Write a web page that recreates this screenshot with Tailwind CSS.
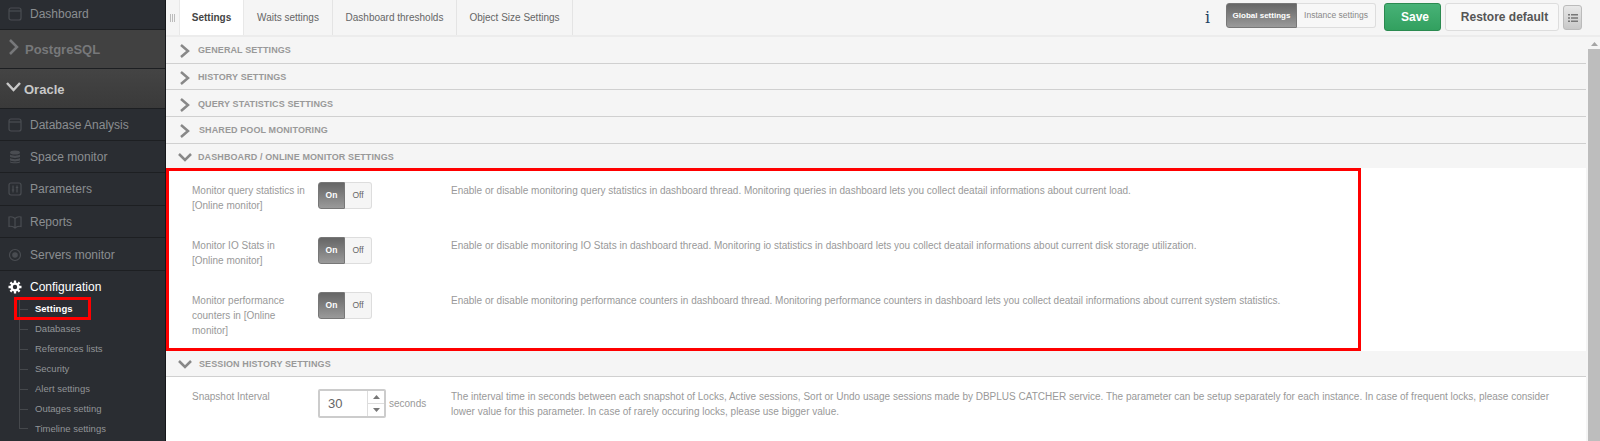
<!DOCTYPE html>
<html lang="en">
<head>
  <meta charset="UTF-8">
  <title>Settings</title>
  <script src="https://cdn.jsdelivr.net/npm/@tailwindcss/browser@4"></script>
</head>
<body class="bg-white font-['Liberation_Sans',Arial,sans-serif]">
  <div class="relative flex h-[441px] w-[1600px] overflow-hidden">

    <!-- sidebar -->
    <aside class="w-[166px] shrink-0 bg-[#2a2d32] border-r border-[#15171a] text-[#8b8e91] text-[12px]">
      <div class="flex items-center h-[30px] pl-[8px] pb-[2px] gap-[8px] border-b border-[#1d1f22]">
        <svg width="14" height="14" viewBox="0 0 14 14" fill="none" stroke="#4a4d52" stroke-width="1.2"><rect x="1" y="1" width="12" height="12" rx="2"/><path d="M1 4h12"/></svg>
        <span>Dashboard</span>
      </div>
      <div class="flex items-center h-[39px] pl-[9px] gap-[6px] bg-[#414141] border-b border-[#1d1f22] text-[#77787a] font-bold text-[13px]">
        <svg class="-mt-1" width="10" height="16" viewBox="0 0 10 16" fill="none" stroke="#77787a" stroke-width="2.500"><path d="M1 1l7 7-7 7"/></svg>
        <span class="mt-px">PostgreSQL</span>
      </div>
      <div class="flex items-center h-[39px] pl-[6px] gap-[3px] bg-linear-to-b from-[#444] to-[#3a3a3a] text-[#c8c8c8] font-bold text-[13px]">
        <svg width="15" height="10" viewBox="0 0 15 10" fill="none" stroke="#c8c8c8" stroke-width="2.500" class="-mt-1"><path d="M1 1l6.500 7 6.500-7"/></svg>
        <span class="mt-[3px]">Oracle</span>
      </div>
      <div class="flex items-center h-[33px] pl-[8px] gap-[8px] border-b border-t border-[#1d1f22]">
        <svg width="14" height="14" viewBox="0 0 14 14" fill="none" stroke="#4a4d52" stroke-width="1.2"><rect x="1" y="1" width="12" height="12" rx="2"/><path d="M1 4h12"/></svg>
        <span>Database Analysis</span>
      </div>
      <div class="flex items-center h-[32px] pl-[8px] gap-[8px] pt-px border-b border-[#1d1f22]">
        <svg width="14" height="14" viewBox="0 0 14 14" fill="#4a4d52"><ellipse cx="7" cy="2.500" rx="5" ry="2"/><path d="M2 4.500c1 1.500 9 1.500 10 0v2.300c-1 1.500-9 1.500-10 0zM2 8c1 1.500 9 1.500 10 0v2.300c-1 1.500-9 1.500-10 0zM2 11.200c1 1.500 9 1.500 10 0v1c-1 1.500-9 1.500-10 0z"/></svg>
        <span>Space monitor</span>
      </div>
      <div class="flex items-center h-[33px] pl-[8px] gap-[8px] border-b border-[#1d1f22]">
        <svg width="14" height="14" viewBox="0 0 14 14" fill="none" stroke="#4a4d52" stroke-width="1.2"><rect x="1" y="1" width="12" height="12" rx="2"/><path d="M5 3.500v7M9 3.500v7M3.800 8h2.400M7.800 5.500h2.400"/></svg>
        <span>Parameters</span>
      </div>
      <div class="flex items-center h-[32px] pl-[8px] gap-[8px] pt-px border-b border-[#1d1f22]">
        <svg width="14" height="14" viewBox="0 0 14 14" fill="none" stroke="#4a4d52" stroke-width="1.2"><path d="M7 3.500C5.500 2 3 1.500 1 2v9.500c2-.5 4.500 0 6 1.500 1.500-1.500 4-2 6-1.500V2c-2-.5-4.500 0-6 1.500zM7 3.500V13"/></svg>
        <span>Reports</span>
      </div>
      <div class="flex items-center h-[33px] pl-[8px] gap-[8px] pt-px border-b border-[#1d1f22]">
        <svg width="14" height="14" viewBox="0 0 14 14" fill="none" stroke="#4a4d52" stroke-width="1.2"><circle cx="7" cy="7" r="5.500"/><circle cx="7" cy="7" r="2.200" fill="#4a4d52"/></svg>
        <span>Servers monitor</span>
      </div>
      <div class="flex items-center h-[25px] mt-[3px] pl-[8px] gap-[8px] text-white">
        <svg width="14" height="14" viewBox="0 0 14 14" fill="none" stroke="#fff"><circle cx="7" cy="7" r="3.400" stroke-width="2.400"/><path stroke-width="2.300" d="M7 0.500v2.500M7 11v2.500M0.500 7h2.500M11 7h2.500M2.400 2.400l1.800 1.800M9.800 9.800l1.800 1.800M2.400 11.600l1.800-1.800M9.800 4.200l1.800-1.800"/></svg>
        <span>Configuration</span>
      </div>
      <div class="text-[9.500px] text-[#919497]">
        <div class="flex items-center h-5 ml-[19px] border-l border-[#45484c] text-white font-bold"><span class="w-2 border-b border-[#45484c] mr-[7px]"></span>Settings</div>
        <div class="flex items-center h-5 ml-[19px] border-l border-[#45484c]"><span class="w-2 border-b border-[#45484c] mr-[7px]"></span>Databases</div>
        <div class="flex items-center h-5 ml-[19px] border-l border-[#45484c]"><span class="w-2 border-b border-[#45484c] mr-[7px]"></span>References lists</div>
        <div class="flex items-center h-5 ml-[19px] border-l border-[#45484c]"><span class="w-2 border-b border-[#45484c] mr-[7px]"></span>Security</div>
        <div class="flex items-center h-5 ml-[19px] border-l border-[#45484c]"><span class="w-2 border-b border-[#45484c] mr-[7px]"></span>Alert settings</div>
        <div class="flex items-center h-5 ml-[19px] border-l border-[#45484c]"><span class="w-2 border-b border-[#45484c] mr-[7px]"></span>Outages setting</div>
        <div class="flex items-center h-5 ml-[19px]"><span class="self-start w-[9px] h-[10px] border-l border-b border-[#45484c] mr-[7px]"></span>Timeline settings</div>
      </div>
    </aside>

    <!-- main -->
    <main class="flex-1 min-w-0 flex flex-col">
      <div class="flex items-start h-[37px] bg-[#f5f5f5] border-b-2 border-[#ececec] pr-[18px]">
        <div class="w-[13px] h-full flex items-center justify-center gap-px">
          <span class="w-px h-[8px] bg-[#bbb]"></span><span class="w-px h-[8px] bg-[#bbb]"></span><span class="w-px h-[8px] bg-[#bbb]"></span>
        </div>
        <div class="flex h-[35px] text-[10px] text-[#666]">
          <div class="w-[65px] flex items-center justify-center bg-white border-x border-[#e8e8e8] text-[#444] font-bold">Settings</div>
          <div class="w-[89px] flex items-center justify-center border-r border-[#e4e4e4]">Waits settings</div>
          <div class="w-[124px] flex items-center justify-center border-r border-[#e4e4e4]">Dashboard thresholds</div>
          <div class="w-[116px] flex items-center justify-center border-r border-[#e4e4e4]">Object Size Settings</div>
        </div>
        <div class="ml-auto flex items-start h-full">
          <span class="mt-[8px] mr-[16px] font-['DejaVu_Serif',serif] text-[16px] leading-[20px] text-[#1f3f5f]">i</span>
          <div class="flex mt-[3px] h-[25px] text-[8.500px]">
            <div class="w-[71px] flex items-center justify-center rounded-l-[3px] bg-linear-to-b from-[#666] to-[#9a9a9a] border border-[#777] text-white font-bold text-[8px]">Global settings</div>
            <div class="w-[79px] flex items-center justify-center rounded-r-[3px] bg-[#f7f7f7] border border-[#ddd] border-l-0 text-[#888]">Instance settings</div>
          </div>
          <button class="mt-[3px] ml-[8px] pl-[5px] w-[57px] h-[28px] rounded-[3px] bg-linear-to-b from-[#47b277] to-[#32a05f] border border-[#2b8a50] text-white text-[12px] font-bold">Save</button>
          <button class="mt-[3px] ml-[4px] pl-[5px] w-[114px] h-[28px] rounded-[3px] bg-[#f8f8f8] border border-[#ddd] text-[#555] text-[12px] font-bold">Restore default</button>
          <button class="mt-[5px] ml-[4px] w-[19px] h-[25px] rounded-[3px] bg-linear-to-b from-[#e8e8e8] to-[#c8c8c8] border border-[#bbb] flex items-center justify-center">
            <svg width="10" height="8" viewBox="0 0 10 8" fill="#777"><path d="M0 0h2v1.500H0zM3 0h7v1.500H3zM0 3.200h2v1.500H0zM3 3.200h7v1.500H3zM0 6.400h2v1.500H0zM3 6.400h7v1.500H3z"/></svg>
          </button>
        </div>
      </div>

      <div class="flex-1 min-h-0 flex">
        <div class="flex-1 min-w-0">
          <div class="flex items-center h-[27px] pt-[2px] pl-[14px] gap-[8px] bg-[#f5f5f5] border-b border-[#d0d0d0] text-[9px] font-bold tracking-[0.1px] text-[#999]">
            <svg width="10" height="14" viewBox="0 0 10 14" fill="none" stroke="#888" stroke-width="2.500"><path d="M1 1l7 6-7 6"/></svg>GENERAL SETTINGS
          </div>
          <div class="flex items-center h-[26px] pt-[2px] pl-[14px] gap-[8px] bg-[#f5f5f5] border-b border-[#d0d0d0] text-[9px] font-bold tracking-[0.1px] text-[#999]">
            <svg width="10" height="14" viewBox="0 0 10 14" fill="none" stroke="#888" stroke-width="2.500"><path d="M1 1l7 6-7 6"/></svg>HISTORY SETTINGS
          </div>
          <div class="flex items-center h-[27px] pt-[3px] pl-[14px] gap-[8px] bg-[#f5f5f5] border-b border-[#d0d0d0] text-[9px] font-bold tracking-[0.1px] text-[#999]">
            <svg width="10" height="14" viewBox="0 0 10 14" fill="none" stroke="#888" stroke-width="2.500"><path d="M1 1l7 6-7 6"/></svg>QUERY STATISTICS SETTINGS
          </div>
          <div class="flex items-center h-[27px] pt-[2px] pl-[14px] gap-[9px] bg-[#f5f5f5] border-b border-[#d0d0d0] text-[9px] font-bold tracking-[0.1px] text-[#999]">
            <svg width="10" height="14" viewBox="0 0 10 14" fill="none" stroke="#888" stroke-width="2.500"><path d="M1 1l7 6-7 6"/></svg>SHARED POOL MONITORING
          </div>
          <div class="flex items-center h-[24px] pt-[3px] pl-[12px] gap-[6px] bg-[#f5f5f5] text-[9px] font-bold tracking-[0.1px] text-[#999]">
            <svg width="14" height="9" viewBox="0 0 14 9" fill="none" stroke="#888" stroke-width="2.500"><path d="M1 1l6 6 6-6"/></svg>DASHBOARD / ONLINE MONITOR SETTINGS
          </div>

          <div class="h-[183px] pt-[14px] text-[10px] leading-[15px] text-[#999]">
            <div class="flex h-[55px]">
              <div class="w-[152px] pl-[26px] pt-px shrink-0">Monitor query statistics in [Online monitor]</div>
              <div class="flex h-[27px] w-[54px] shrink-0 text-[8.500px] leading-none">
                <div class="w-[27px] flex items-center justify-center rounded-l-[3px] bg-linear-to-b from-[#666] to-[#9a9a9a] border border-[#777] text-white font-bold">On</div>
                <div class="w-[27px] flex items-center justify-center rounded-r-[3px] bg-[#f5f5f5] border border-[#ddd] border-l-0 text-[#666]">Off</div>
              </div>
              <div class="pl-[79px] pt-px">Enable or disable monitoring query statistics in dashboard thread. Monitoring queries in dashboard lets you collect deatail informations about current load.</div>
            </div>
            <div class="flex h-[55px]">
              <div class="w-[152px] pl-[26px] pt-px shrink-0">Monitor IO Stats in<br>[Online monitor]</div>
              <div class="flex h-[27px] w-[54px] shrink-0 text-[8.500px] leading-none">
                <div class="w-[27px] flex items-center justify-center rounded-l-[3px] bg-linear-to-b from-[#666] to-[#9a9a9a] border border-[#777] text-white font-bold">On</div>
                <div class="w-[27px] flex items-center justify-center rounded-r-[3px] bg-[#f5f5f5] border border-[#ddd] border-l-0 text-[#666]">Off</div>
              </div>
              <div class="pl-[79px] pt-px">Enable or disable monitoring IO Stats in dashboard thread. Monitoring io statistics in dashboard lets you collect deatail informations about current disk storage utilization.</div>
            </div>
            <div class="flex h-[55px]">
              <div class="w-[152px] pl-[26px] pr-[20px] pt-px shrink-0">Monitor performance counters in [Online monitor]</div>
              <div class="flex h-[27px] w-[54px] shrink-0 text-[8.500px] leading-none">
                <div class="w-[27px] flex items-center justify-center rounded-l-[3px] bg-linear-to-b from-[#666] to-[#9a9a9a] border border-[#777] text-white font-bold">On</div>
                <div class="w-[27px] flex items-center justify-center rounded-r-[3px] bg-[#f5f5f5] border border-[#ddd] border-l-0 text-[#666]">Off</div>
              </div>
              <div class="pl-[79px] pt-px">Enable or disable monitoring performance counters in dashboard thread. Monitoring performance counters in dashboard lets you collect deatail informations about current system statistics.</div>
            </div>
          </div>

          <div class="flex items-center h-[26px] pt-[2px] pl-[12px] gap-[7px] bg-[#f5f5f5] border-b border-[#d0d0d0] text-[9px] font-bold tracking-[0.1px] text-[#999]">
            <svg width="14" height="9" viewBox="0 0 14 9" fill="none" stroke="#888" stroke-width="2.500"><path d="M1 1l6 6 6-6"/></svg>SESSION HISTORY SETTINGS
          </div>
          <div class="flex pt-[11px] text-[10px] leading-[15px] text-[#999]">
            <div class="w-[152px] pl-[26px] pt-px shrink-0">Snapshot Interval</div>
            <div class="flex items-center w-[133px] h-[29px] mt-px shrink-0">
              <div class="flex w-[68px] h-[29px] border-2 border-[#ccc] rounded-[2px] bg-white">
                <span class="flex-1 flex items-center pl-[8px] text-[13px] text-[#666]">30</span>
                <div class="w-[17px] flex flex-col border-l border-[#ddd]">
                  <span class="flex-1 flex items-center justify-center border-b border-[#ddd]"><svg width="7" height="4" viewBox="0 0 7 4" fill="#777"><path d="M3.500 0L7 4H0z"/></svg></span>
                  <span class="flex-1 flex items-center justify-center"><svg width="7" height="4" viewBox="0 0 7 4" fill="#777"><path d="M3.500 4L0 0h7z"/></svg></span>
                </div>
              </div>
              <span class="ml-[3px]">seconds</span>
            </div>
            <div class="w-[1115px] pt-px">The interval time in seconds between each snapshot of Locks, Active sessions, Sort or Undo usage sessions made by DBPLUS CATCHER service. The parameter can be setup separately for each instance. In case of frequent locks, please consider lower value for this parameter. In case of rarely occuring locks, please use bigger value.</div>
          </div>
        </div>
        <!-- scrollbar -->
        <div class="w-[14px] shrink-0 bg-[#f5f5f5] pl-[2px] flex flex-col items-center">
          <svg class="mt-[5px]" width="7" height="4" viewBox="0 0 7 4" fill="#a5a5a5"><path d="M3.500 0L7 4H0z"/></svg>
          <div class="mt-[3px] w-full flex-1 bg-[#bdbdbd]"></div>
        </div>
      </div>
    </main>

    <!-- annotation boxes over the screenshot -->
    <div class="absolute left-[166px] top-[168px] w-[1195px] h-[183px] border-[3px] border-[#ff0000]"></div>
    <div class="absolute left-[14px] top-[297px] w-[77px] h-[23px] border-[3px] border-[#ff0000]"></div>
  </div>
</body>
</html>
